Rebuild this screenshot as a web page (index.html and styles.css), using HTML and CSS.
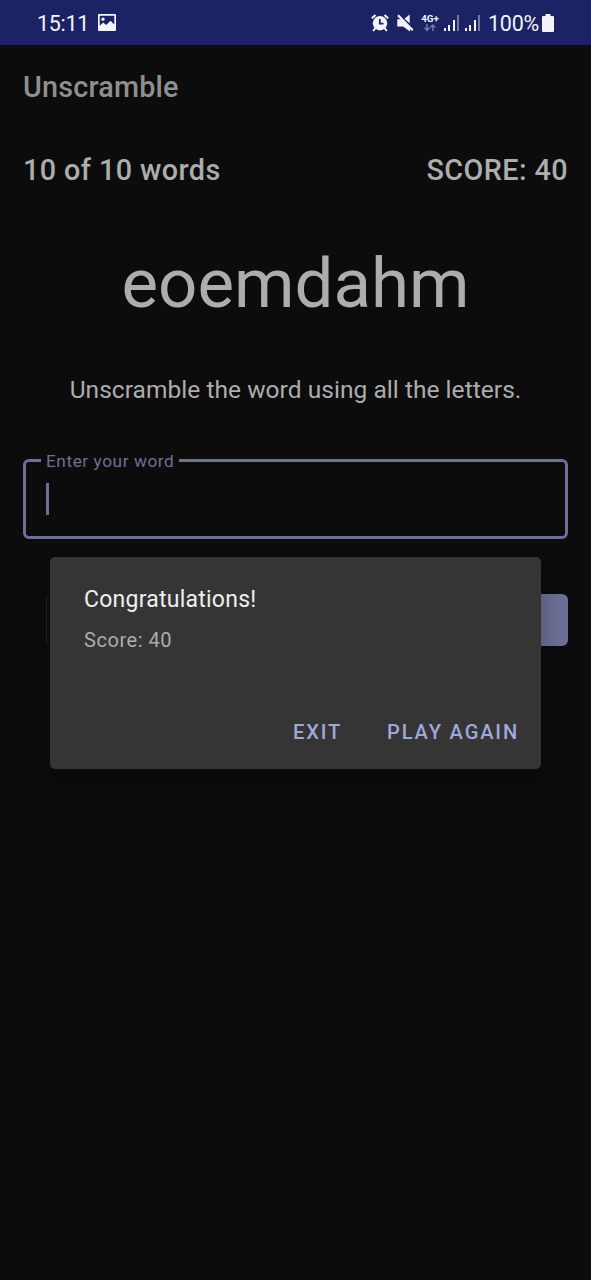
FILE: index.html
```html
<!DOCTYPE html>
<html lang="en">
<head>
<meta charset="utf-8">
<title>Unscramble</title>
<link rel="stylesheet" href="styles.css">
</head>
<body>
<div class="screen">
  <div class="status-bar">
    <span class="clock">15:11</span>
    <svg class="icon-picture" width="18" height="17" viewBox="0 0 18 17"><path fill="#f3f3fb" fill-rule="evenodd" d="M1 0h16Q18 0 18 1v15Q18 17 17 17H1Q0 17 0 16V1Q0 0 1 0ZM1.700 1.700v10l3.500-3.200 3 2.500 4.300-4.200 3.800 3.700V1.700ZM5 3.600a1.700 1.700 0 1 1 0 3.400a1.700 1.700 0 0 1 0-3.400Z"/></svg>
    <div class="status-right">
      <svg class="icon-alarm" width="18" height="18" viewBox="0 0 18 18"><path d="M.8 4.200 4.500.9M17.200 4.200 13.500.9M4.300 14.200 2.200 17M13.700 14.200 15.800 17" stroke="#f3f3fb" stroke-width="2" fill="none"/><circle cx="9" cy="9.200" r="7.200" fill="#f3f3fb"/><path d="M8.800 5v4.700h3.700" fill="none" stroke="#1b2365" stroke-width="1.800"/></svg>
      <svg class="icon-mute" width="17" height="18" viewBox="0 0 17 18"><path d="M.3 5.300H5l8 8v4.200L6.200 12.500H.3ZM12.700.5v8.800L7.500 4.700Z" fill="#f3f3fb"/><path d="M1 1.300 15.700 16.300" stroke="#f3f3fb" stroke-width="2.300"/></svg>
      <div class="network">
        <span class="network-type">4G+</span>
        <svg width="14" height="8" viewBox="0 0 14 8"><path d="M4 0v6M1.500 3.800 4 6.400l2.500-2.600M9.800 7V1M7.300 3.600 9.800 1l2.500 2.600" fill="none" stroke="#7177a8" stroke-width="1.500"/></svg>
      </div>
      <svg class="icon-signal" width="16" height="17" viewBox="0 0 16 17"><path fill="#f3f3fb" d="M0 13h2v3H0ZM4 10h2v6H4ZM9 5h2v11H9Z"/><path fill="#7177a8" d="M13 0h2v16h-2Z"/></svg>
      <svg class="icon-signal" width="16" height="17" viewBox="0 0 16 17"><path fill="#f3f3fb" d="M0 13h2v3H0ZM4 10h2v6H4ZM9 5h2v11H9Z"/><path fill="#7177a8" d="M13 0h2v16h-2Z"/></svg>
      <span class="battery-text">100%</span>
      <svg class="icon-battery" width="12" height="18" viewBox="0 0 12 18"><path fill="#f3f3fb" d="M3.500 0h5v2H11q1 0 1 1v14q0 1-1 1H1q-1 0-1-1V3q0-1 1-1h2.500Z"/></svg>
    </div>
  </div>
  <header class="app-bar"><h1 class="app-title">Unscramble</h1></header>
  <main class="game">
    <div class="stats"><span class="word-count">10 of 10 words</span><span class="score">SCORE: 40</span></div>
    <div class="word">eoemdahm</div>
    <p class="instructions">Unscramble the word using all the letters.</p>
    <div class="field">
      <label class="field-label">Enter your word</label>
      <span class="caret"></span>
    </div>
    <div class="actions"><div class="skip"></div><div class="submit"></div></div>
  </main>
  <div class="dialog">
    <h2 class="dialog-title">Congratulations!</h2>
    <p class="dialog-text">Score: 40</p>
    <div class="dialog-actions"><span class="exit">EXIT</span><span class="again">PLAY AGAIN</span></div>
  </div>
</div>
</body>
</html>
```

FILE: styles.css
```css
* { box-sizing: border-box; margin: 0; }
body { background: #0c0c0c; font-family: Roboto, sans-serif; }
svg { display: block; flex: none; }
.screen { position: relative; width: 591px; height: 1280px; overflow: hidden; background: #0c0c0c; }
.status-bar { display: flex; align-items: center; height: 45px; padding: 0 37px; background: #1b2365; color: #f3f3fb; }
.clock { font-size: 21.5px; line-height: 30px; padding-top: 2px; letter-spacing: -0.3px; }
.icon-picture { margin-left: 9px; }
.status-right { display: flex; align-items: center; margin-left: auto; }
.icon-mute { margin-left: 8px; }
.network { display: flex; flex-direction: column; align-items: center; width: 18px; margin-left: 7px; }
.network-type { font-size: 9.8px; line-height: 11px; font-weight: 700; }
.icon-signal { margin: 1px 0 0 5px; }
.battery-text { font-size: 21.5px; line-height: 30px; padding-top: 2px; margin-left: 7px; letter-spacing: -0.25px; }
.icon-battery { margin-left: 3px; }
.app-bar { display: flex; align-items: center; height: 84px; padding: 0 23px; }
.app-title { font-size: 28.75px; font-weight: 500; letter-spacing: 0.2px; color: #8f8f8f; }
.game { padding: 23px 23px 0; color: #adadad; }
.stats { display: flex; justify-content: space-between; font-size: 28.75px; line-height: 36px; font-weight: 500; letter-spacing: 0.42px; }
.word { margin-top: 56px; font-size: 69px; line-height: 80px; text-align: center; }
.instructions { margin-top: 51px; font-size: 24.5px; line-height: 30px; letter-spacing: 0.04px; text-align: center; }
.field { position: relative; height: 80px; margin-top: 54px; padding: 21px 20px; border: 3px solid #6c7096; border-radius: 6px; }
.field-label { position: absolute; top: -11px; left: 15px; width: 138px; padding-left: 5px; background: #0c0c0c; color: #6c7096; font-size: 17.25px; line-height: 20px; letter-spacing: 0.56px; white-space: nowrap; }
.caret { display: block; width: 3px; height: 32px; background: #6c7096; }
.actions { display: grid; grid-template-columns: 1fr 1fr; gap: 23px; margin-top: 55px; padding-left: 23px; }
.skip { height: 52px; border: 1px solid #222; border-radius: 6px; }
.submit { height: 52px; border-radius: 6px; background: #6c7096; }
.dialog { position: absolute; left: 50px; top: 557px; width: 491px; height: 212px; padding: 28px 22px 0 34px; border-radius: 5px; background: #353535; box-shadow: 0 12px 24px rgba(0,0,0,.3); }
.dialog-title { font-size: 23px; line-height: 30px; font-weight: 400; letter-spacing: 0.24px; color: #efefef; }
.dialog-text { margin-top: 12px; font-size: 20.1px; line-height: 26px; letter-spacing: 0.5px; color: #acacac; }
.dialog-actions { display: flex; justify-content: flex-end; gap: 45px; margin-top: 66px; font-size: 20.1px; line-height: 26px; font-weight: 500; letter-spacing: 1.85px; color: #9fa8da; }
```
